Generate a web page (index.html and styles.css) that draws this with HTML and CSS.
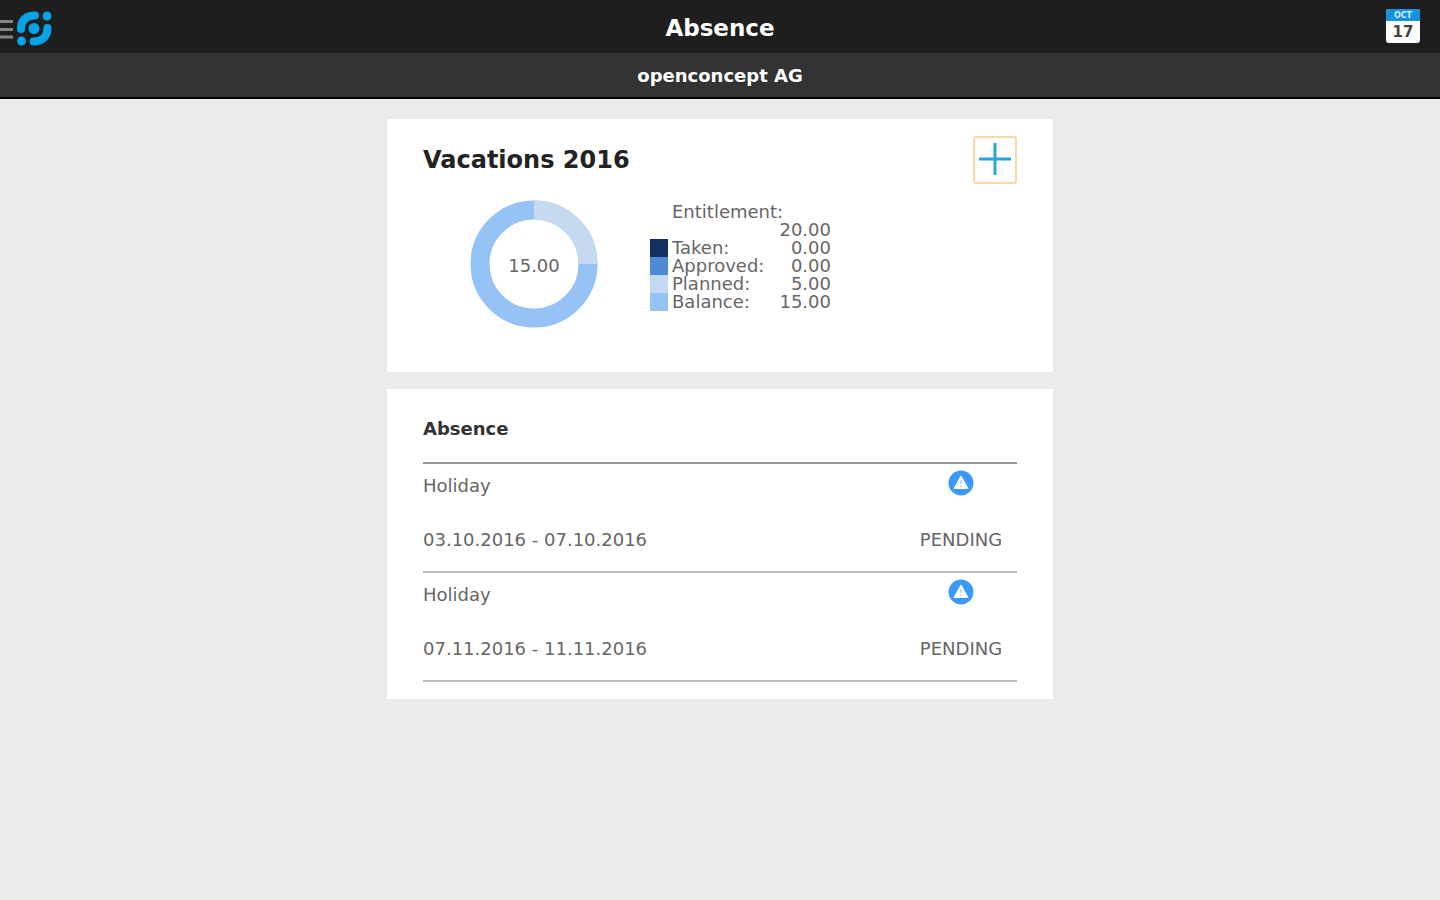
FILE: index.html
```html
<!DOCTYPE html>
<html lang="en">
<head>
  <meta charset="UTF-8">
  <meta name="viewport" content="width=device-width, initial-scale=1.0">
  <title>Absence</title>
  <link rel="stylesheet" href="styles.css">
</head>
<body>
  <header class="topbar">
    <button class="icon-button" aria-label="Menu">
      <svg width="52" height="53" viewBox="0 0 52 53">
        <g stroke="#858585" stroke-width="3">
          <path d="M0 21.5h13M0 29.5h13M0 37h13"/>
        </g>
        <g fill="#06a3e8">
          <circle cx="34" cy="28.500" r="5.500"/>
          <circle cx="47" cy="16" r="4.500"/>
          <circle cx="21.500" cy="41" r="4.500"/>
        </g>
        <g fill="none" stroke="#06a3e8" stroke-width="8" stroke-linecap="round">
          <path d="M21 29C21 20 26 15.500 35 15.500"/>
          <path d="M47.500 28C47.500 37 42 41.500 33.500 41.500"/>
        </g>
      </svg>
    </button>
    <h1 class="topbar-title">Absence</h1>
    <button class="icon-button calendar-button" aria-label="Calendar">
      <svg width="34" height="34" viewBox="0 0 34 34">
        <rect width="34" height="34" rx="3" fill="#fff"/>
        <path d="M0 12V3a3 3 0 0 1 3-3h28a3 3 0 0 1 3 3v9z" fill="#1493dc"/>
        <text class="calendar-month" x="17" y="9">OCT</text>
        <text class="calendar-day" x="17" y="28">17</text>
      </svg>
    </button>
  </header>
  <div class="company">openconcept AG</div>

  <main class="content">
    <section class="card">
      <div class="card-header">
        <h2 class="card-title">Vacations 2016</h2>
        <button class="add-button" aria-label="Add absence">
          <svg width="32" height="34" viewBox="0 0 32 34">
            <path d="M16 0v32M0 16h32" stroke="#2ba3dc" stroke-width="3"/>
          </svg>
        </button>
      </div>
      <div class="vacation">
        <svg class="donut" width="128" height="128" viewBox="0 0 128 128">
          <circle cx="64" cy="64" r="54" fill="none" stroke="#95c3f6" stroke-width="19"/>
          <path d="M64 10A54 54 0 0 1 118 64" fill="none" stroke="#c5d9f1" stroke-width="19"/>
          <text class="donut-label" x="64" y="72">15.00</text>
        </svg>
        <table class="legend">
          <tr><td></td><th colspan="2">Entitlement:</th></tr>
          <tr><td></td><td></td><td class="value">20.00</td></tr>
          <tr><td class="swatch taken"></td><th>Taken:</th><td class="value">0.00</td></tr>
          <tr><td class="swatch approved"></td><th>Approved:</th><td class="value">0.00</td></tr>
          <tr><td class="swatch planned"></td><th>Planned:</th><td class="value">5.00</td></tr>
          <tr><td class="swatch balance"></td><th>Balance:</th><td class="value">15.00</td></tr>
        </table>
      </div>
    </section>

    <section class="card">
      <h2 class="list-title">Absence</h2>
      <ul class="absences">
        <li class="absence">
          <span>Holiday</span>
          <svg class="status-icon" width="26" height="26" viewBox="0 0 26 26">
            <circle cx="13" cy="13" r="12.500" fill="#3b99fc"/>
            <path d="M13 6L20 18.500H6z" fill="#fff" stroke="#fff" stroke-linejoin="round"/>
            <path d="M13 10v4M13 15.500v1.500" stroke="#a9d2ff" stroke-width="1.500"/>
          </svg>
          <span class="dates">03.10.2016 - 07.10.2016</span>
          <span class="status">PENDING</span>
        </li>
        <li class="absence">
          <span>Holiday</span>
          <svg class="status-icon" width="26" height="26" viewBox="0 0 26 26">
            <circle cx="13" cy="13" r="12.500" fill="#3b99fc"/>
            <path d="M13 6L20 18.500H6z" fill="#fff" stroke="#fff" stroke-linejoin="round"/>
            <path d="M13 10v4M13 15.500v1.500" stroke="#a9d2ff" stroke-width="1.500"/>
          </svg>
          <span class="dates">07.11.2016 - 11.11.2016</span>
          <span class="status">PENDING</span>
        </li>
      </ul>
    </section>
  </main>
</body>
</html>
```
FILE: styles.css
```css
* {
  box-sizing: border-box;
}
body {
  margin: 0;
  background-color: #ebebeb;
  color: #666;
  font-family: "DejaVu Sans", Verdana, sans-serif;
  font-size: 18px;
}
h1, h2 {
  margin: 0;
}

/* top bars */
.topbar {
  display: grid;
  grid-template-columns: 1fr auto 1fr;
  align-items: center;
  height: 53px;
  background-color: #1e1e1e;
}
.topbar-title {
  color: #fff;
  font-size: 23px;
  line-height: 28px;
  padding-top: 2px;
}
.icon-button {
  display: block;
  justify-self: start;
  padding: 0;
  border: none;
  background: none;
  font-family: inherit;
  cursor: pointer;
}
.icon-button svg {
  display: block;
}
.calendar-button {
  justify-self: end;
  margin-right: 20px;
  margin-bottom: 2px;
}
.calendar-month {
  fill: #d5efff;
  font-size: 8px;
  font-weight: bold;
  text-anchor: middle;
}
.calendar-day {
  fill: #444;
  font-size: 15px;
  font-weight: bold;
  text-anchor: middle;
}
.company {
  padding: 12px 0 10px;
  border-bottom: 2px solid #000;
  background-color: #333;
  color: #fff;
  font-weight: bold;
  line-height: 22px;
  text-align: center;
}

/* cards */
.content {
  display: flex;
  flex-direction: column;
  gap: 17px;
  max-width: 666px;
  margin: 20px auto;
}
.card {
  padding: 17px 36px;
  background-color: #fff;
}
.card-header {
  display: flex;
  justify-content: space-between;
  align-items: center;
}
.card-title {
  color: #222;
  font-size: 24px;
}
.add-button {
  display: flex;
  justify-content: center;
  align-items: center;
  width: 44px;
  height: 48px;
  padding: 0;
  border: 2px solid #f8d9a3;
  border-radius: 3px;
  background: none;
  cursor: pointer;
}

/* vacation summary */
.vacation {
  display: flex;
  gap: 52px;
  padding: 16px 47px 27px;
}
.donut-label {
  fill: #666;
  text-anchor: middle;
}
.legend {
  align-self: flex-start;
  width: 181px;
  margin-top: 3px;
  border-collapse: collapse;
  line-height: 18px;
}
.legend tr {
  height: 18px;
}
.legend td,
.legend th {
  padding: 0;
}
.legend th {
  padding-left: 4px;
  font-weight: normal;
  text-align: left;
}
.legend .value {
  text-align: right;
}
.legend .swatch {
  width: 18px;
}
.taken {
  background-color: #14305f;
}
.approved {
  background-color: #4f8ad6;
}
.planned {
  background-color: #c5d9f1;
}
.balance {
  background-color: #95c3f6;
}

/* absence list */
.list-title {
  padding: 10px 0 20px;
  border-bottom: 2px solid #999;
  color: #333;
  font-size: 18px;
  line-height: 26px;
}
.absences {
  margin: 0;
  padding: 0;
  list-style: none;
}
.absence {
  display: grid;
  grid-template-columns: 1fr 112px;
  grid-template-rows: 43px 64px;
  align-items: center;
  border-bottom: 2px solid #bbb;
}
.status-icon {
  align-self: start;
  justify-self: center;
  margin-top: 6px;
}
.status {
  text-align: center;
}
```
